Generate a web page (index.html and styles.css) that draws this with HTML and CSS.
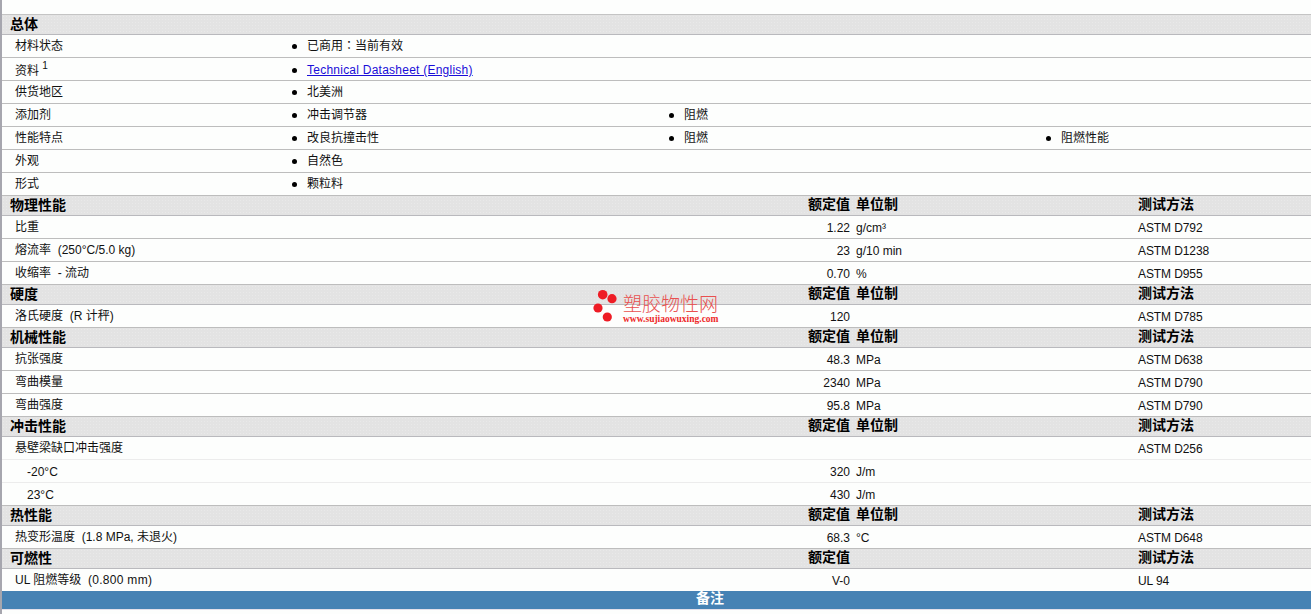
FILE: index.html
```html
<!DOCTYPE html>
<html lang="zh">
<head>
<meta charset="utf-8">
<title>塑胶物性</title>
<link rel="stylesheet" href="styles.css">
</head>
<body>
<main class="sheet">
  <div class="band head first"><b class="h-name">总体</b></div>
  <div class="row list"><span class="name">材料状态</span><span class="bul">已商用<span class="tc" lang="zh-TW">：</span>当前有效</span></div>
  <div class="row list link-row"><span class="name">资料 <sup>1</sup></span><span class="bul"><a href="#">Technical Datasheet (English)</a></span></div>
  <div class="row list"><span class="name">供货地区</span><span class="bul">北美洲</span></div>
  <div class="row list"><span class="name">添加剂</span><span class="bul">冲击调节器</span><span class="bul">阻燃</span></div>
  <div class="row list"><span class="name">性能特点</span><span class="bul">改良抗撞击性</span><span class="bul">阻燃</span><span class="bul">阻燃性能</span></div>
  <div class="row list"><span class="name">外观</span><span class="bul">自然色</span></div>
  <div class="row list"><span class="name">形式</span><span class="bul">颗粒料</span></div>

  <div class="band head"><b class="h-name">物理性能</b><b class="val">额定值</b><b class="unit">单位制</b><b class="meth">测试方法</b></div>
  <div class="row data"><span class="name">比重</span><span class="val">1.22</span><span class="unit">g/cm³</span><span class="meth">ASTM D792</span></div>
  <div class="row data"><span class="name">熔流率&nbsp; (250°C/5.0 kg)</span><span class="val">23</span><span class="unit">g/10 min</span><span class="meth">ASTM D1238</span></div>
  <div class="row data"><span class="name">收缩率&nbsp; - 流动</span><span class="val">0.70</span><span class="unit">%</span><span class="meth">ASTM D955</span></div>

  <div class="band head"><b class="h-name">硬度</b><b class="val">额定值</b><b class="unit">单位制</b><b class="meth">测试方法</b></div>
  <div class="row data"><span class="name">洛氏硬度&nbsp; (R 计秤)</span><span class="val">120</span><span class="unit"></span><span class="meth">ASTM D785</span></div>

  <div class="band head"><b class="h-name">机械性能</b><b class="val">额定值</b><b class="unit">单位制</b><b class="meth">测试方法</b></div>
  <div class="row data"><span class="name">抗张强度</span><span class="val">48.3</span><span class="unit">MPa</span><span class="meth">ASTM D638</span></div>
  <div class="row data"><span class="name">弯曲模量</span><span class="val">2340</span><span class="unit">MPa</span><span class="meth">ASTM D790</span></div>
  <div class="row data"><span class="name">弯曲强度</span><span class="val">95.8</span><span class="unit">MPa</span><span class="meth">ASTM D790</span></div>

  <div class="band head"><b class="h-name">冲击性能</b><b class="val">额定值</b><b class="unit">单位制</b><b class="meth">测试方法</b></div>
  <div class="row data faint"><span class="name">悬壁梁缺口冲击强度</span><span class="val"></span><span class="unit"></span><span class="meth">ASTM D256</span></div>
  <div class="row data faint"><span class="name sub">-20°C</span><span class="val">320</span><span class="unit">J/m</span><span class="meth"></span></div>
  <div class="row data"><span class="name sub">23°C</span><span class="val">430</span><span class="unit">J/m</span><span class="meth"></span></div>

  <div class="band head"><b class="h-name">热性能</b><b class="val">额定值</b><b class="unit">单位制</b><b class="meth">测试方法</b></div>
  <div class="row data"><span class="name">热变形温度&nbsp; (1.8 MPa, 未退火)</span><span class="val">68.3</span><span class="unit">°C</span><span class="meth">ASTM D648</span></div>

  <div class="band head"><b class="h-name">可燃性</b><b class="val">额定值</b><b class="unit"></b><b class="meth">测试方法</b></div>
  <div class="row data last"><span class="name">UL 阻燃等级&nbsp; <span class="wide">(0.800 mm)</span></span><span class="val">V-0</span><span class="unit"></span><span class="meth">UL 94</span></div>

  <div class="notes">备注</div>
  <div class="mark" aria-label="塑胶物性网">
    <svg class="mark-dots" width="26" height="34" viewBox="0 0 26 34"><circle cx="9.7" cy="5.7" r="4.8" /><circle cx="19" cy="9.7" r="4.6" /><circle cx="5" cy="19" r="4.6" /><circle cx="14.3" cy="28" r="4.6" /></svg>
    <div class="mark-text"><div class="mark-cn">塑胶物性网</div><div class="mark-en">www.sujiaowuxing.com</div></div>
  </div>
</main>
</body>
</html>
```
FILE: styles.css
```css
* { box-sizing: border-box; }
html, body { margin: 0; padding: 0; background: #fdfefd; }
body {
  font-family: "Liberation Sans", "Noto Sans CJK SC", sans-serif;
  font-size: 12px;
  line-height: 14px;
  color: #111;
  overflow: hidden;
  height: 614px;
}
.sheet {
  position: relative;
  height: 614px;
  padding-top: 14px;
  border-left: 2px solid #a6a6ae;
}
.band, .row {
  display: grid;
  grid-template-columns: 279px 377px 377px 1fr;
  white-space: nowrap;
}
.head, .data { grid-template-columns: 719px 129px 282px 1fr; }
.band {
  height: 20px;
  padding-top: 2px;
  background-color: #e3e3e3;
  background-image: radial-gradient(circle, #e9e9e9 0.5px, transparent 0.6px);
  background-size: 3px 3px;
  border-bottom: 1px solid #b9b9bd;
  font-size: 14px;
}
.first { height: 21px; border-top: 1px solid #c4c4c4; }
.band b { font-weight: 700; color: #000; }
.h-name { padding-left: 8px; }
.row {
  height: 23px;
  padding-top: 4px;
  border-bottom: 1px solid #bdbdbd;
}
.faint { border-bottom-color: #ececec; }
.last { height: 22px; border-bottom: 0; }
.name { padding-left: 13px; }
.data .sub { padding-left: 25px; position: relative; top: 1px; }
.val { text-align: right; }
.unit { padding-left: 6px; }
.data .val, .data .unit, .data .meth { position: relative; top: 1px; }
.band .val, .band .unit, .band .meth { position: relative; top: -1px; }
.meth { grid-column: 4; padding-left: 6px; }
.data .meth { letter-spacing: -0.1px; }
.wide { letter-spacing: 0.3px; }
.tc { font-family: "Noto Sans CJK TC", sans-serif; line-height: 0; }
.bul { position: relative; padding-left: 26px; }
.bul::before {
  content: "";
  position: absolute;
  left: 11px;
  top: 5px;
  width: 5px;
  height: 5px;
  border-radius: 50%;
  background: #000;
}
.link-row .bul { top: 1px; }
.link-row .name { position: relative; top: 2px; }
.row a { color: #1a0dd8; text-decoration: underline; letter-spacing: 0.24px; }
sup { font-size: 10px; line-height: 0; position: relative; top: -1px; vertical-align: super; }
.notes {
  height: 19px;
  background: #4682b4;
  border-bottom: 1px solid #e4e0ea;
  color: #fff;
  font-size: 14px;
  font-weight: 700;
  line-height: 15px;
  text-align: center;
  padding-left: 107px;
}
.mark {
  position: absolute;
  left: 591px;
  top: 289px;
  display: flex;
  gap: 4px;
  pointer-events: none;
}
.mark-dots { fill: #ee1c25; display: block; }
.mark-text { padding-top: 7px; }
.mark-cn {
  color: #e8504f;
  font-size: 19px;
  line-height: 18px;
  font-weight: 300;
}
.mark-en {
  color: #ee2a2a;
  font-family: "Liberation Serif", serif;
  font-size: 9.5px;
  font-weight: 700;
  line-height: 10px;
}
```
